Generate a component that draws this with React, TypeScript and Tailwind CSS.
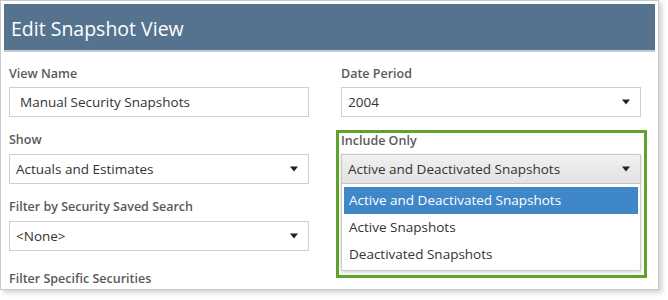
import React from 'react'

const FONT = "font-['Open_Sans','Noto_Sans',sans-serif]"

const Caret: React.FC = () => (
  <svg width="8" height="6" viewBox="0 0 8 6" className="shrink-0">
    <path d="M0 0.5 H8 L4 5.5 Z" fill="#222" />
  </svg>
)

const Label: React.FC<{ text: string; className?: string }> = ({ text, className = '' }) => (
  <div className={`text-[12.5px] leading-[16px] font-semibold text-[#5a5a5a] mb-[6px] ${className}`}>
    {text}
  </div>
)

const TextInput: React.FC<{ value: string }> = ({ value }) => (
  <div className="h-[30px] border border-[#cfcfcf] bg-white flex items-center pl-[10px] text-[13.5px] text-[#333]">
    {value}
  </div>
)

const Select: React.FC<{ value: string; open?: boolean }> = ({ value, open }) => (
  <div
    className={`h-[30px] border flex items-center justify-between pl-[6px] pr-[10px] text-[13.5px] text-[#333] ${
      open
        ? 'border-[#c8c8c8] bg-gradient-to-b from-[#f0f0f0] to-[#e3e3e3] shadow-[0_1px_3px_rgba(0,0,0,0.18)]'
        : 'border-[#cfcfcf] bg-white'
    }`}
  >
    <span>{value}</span>
    <Caret />
  </div>
)

const OPTIONS = ['Active and Deactivated Snapshots', 'Active Snapshots', 'Deactivated Snapshots']

export default function App() {
  return (
    <div className={`w-[668px] h-[300px] bg-white ${FONT}`}>
      <div className="w-[659px] h-[290px] border border-[#c9c9c9] bg-white p-[3px] overflow-hidden shadow-[3px_3px_5px_rgba(0,0,0,0.18)]">
        {/* header */}
        <div className="h-[48px] bg-[#55728f] border-b-2 border-[#c3ccd6] flex items-center pl-[7px] pt-[4px]">
          <h1 className="text-[19.5px] text-white leading-none">Edit Snapshot View</h1>
        </div>

        {/* form */}
        <div className="flex gap-[32px] pl-[5px] pt-[14px]">
          {/* left column */}
          <div className="w-[300px] flex flex-col">
            <Label text="View Name" className="!mb-[5px]" />
            <TextInput value="Manual Security Snapshots" />
            <Label text="Show" className="mt-[15px]" />
            <Select value="Actuals and Estimates" />
            <Label text="Filter by Security Saved Search" className="mt-[15px]" />
            <Select value="<None>" />
            <Label text="Filter Specific Securities" className="mt-[20px]" />
          </div>

          {/* right column */}
          <div className="w-[300px] flex flex-col">
            <Label text="Date Period" className="!mb-[5px]" />
            <Select value="2004" />
            <div className="mt-[13px] -ml-[5px] -mr-[6px] border-[3px] border-[#5fa32b] pl-[2px] pr-[3px] pb-[4px]">
              <Label text="Include Only" className="!mb-[5px]" />
              <Select value="Active and Deactivated Snapshots" open />
              <div className="border border-t-0 border-[#cacaca] bg-white px-[2px] pt-[3px] pb-[2px] shadow-[0_2px_4px_rgba(0,0,0,0.15)]">
                {OPTIONS.map((opt, i) => (
                  <div
                    key={opt}
                    className={`h-[27px] flex items-center pl-[5px] text-[13.5px] ${
                      i === 0 ? 'bg-[#3e87c9] text-white' : 'text-[#333]'
                    }`}
                  >
                    {opt}
                  </div>
                ))}
              </div>
            </div>
          </div>
        </div>
      </div>
    </div>
  )
}
